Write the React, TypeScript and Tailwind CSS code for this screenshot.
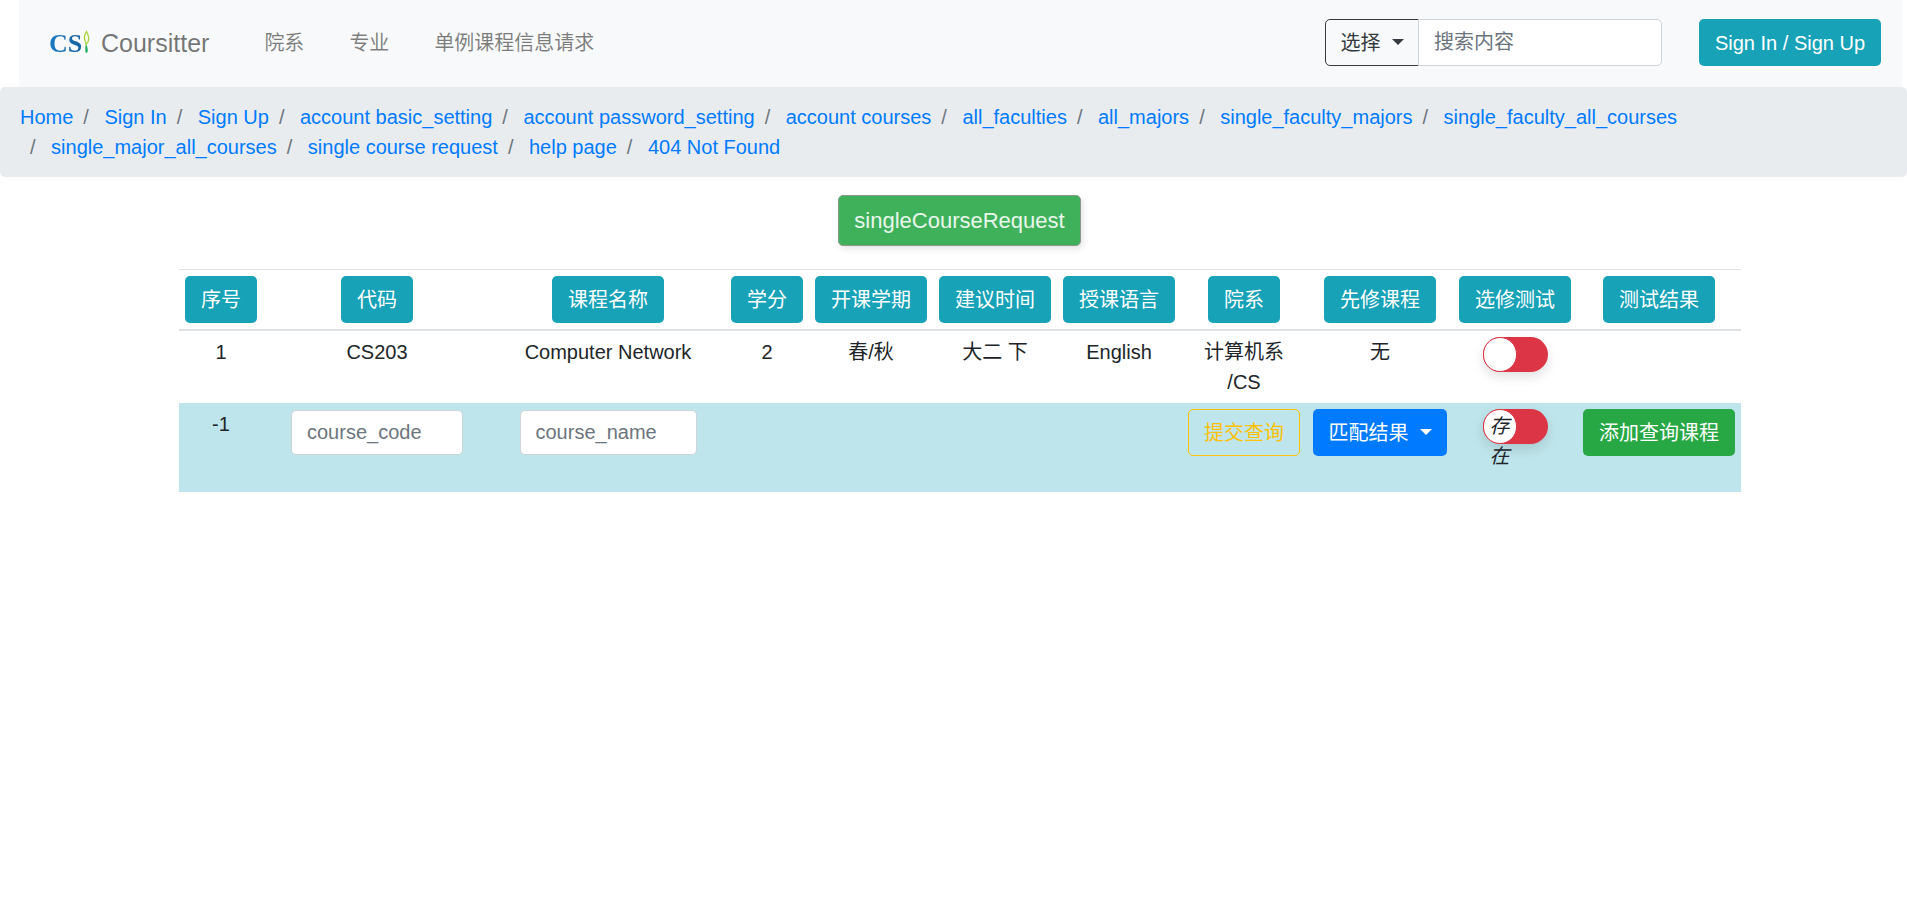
const crumbs = [
  'Home',
  'Sign In',
  'Sign Up',
  'account basic_setting',
  'account password_setting',
  'account courses',
  'all_faculties',
  'all_majors',
  'single_faculty_majors',
  'single_faculty_all_courses',
  'single_major_all_courses',
  'single course request',
  'help page',
  '404 Not Found',
]

const headers = [
  { label: '序号', width: 'w-[84px]' },
  { label: '代码', width: 'w-[228px]' },
  { label: '课程名称', width: 'w-[234px]' },
  { label: '学分', width: 'w-[84px]' },
  { label: '开课学期', width: 'w-[124px]' },
  { label: '建议时间', width: 'w-[124px]' },
  { label: '授课语言', width: 'w-[124px]' },
  { label: '院系', width: 'w-[126px]' },
  { label: '先修课程', width: 'w-[146px]' },
  { label: '选修测试', width: 'w-[124px]' },
  { label: '测试结果', width: 'w-[164px]' },
]

const row = ['1', 'CS203', 'Computer Network', '2', '春/秋', '大二 下', 'English', '计算机系 /CS', '无']

function Caret({ className }: { className: string }) {
  return <span className={`ml-[11px] inline-block h-0 w-0 border-x-[6px] border-t-[6px] border-x-transparent align-[5px] ${className}`} />
}

function Toggle({ children }: { children?: React.ReactNode }) {
  return (
    <div className="relative mx-auto h-[35px] w-[65px] rounded-full bg-[#dc3545] shadow-[0_5px_12px_rgba(0,0,0,0.12)]">
      <div className="h-[35px] w-[34px] rounded-full border border-[#dc3545] bg-white" />
      {children}
    </div>
  )
}

export default function App() {
  return (
    <div className="min-h-screen bg-white font-['Liberation_Sans','Noto_Sans_CJK_SC',sans-serif] text-[20px] leading-[30px] text-[#212529]">
      <nav className="ml-[19px] mr-[5px] flex h-[87px] items-center bg-[#f8f9fa] pb-[2px] pl-[30px] pr-[21px]">
        <a className="flex items-center">
          <span className="mt-[3px] flex h-[30px] w-[42px] items-center overflow-hidden">
            <span className="bg-gradient-to-r from-[#1b7cc4] to-[#17609f] bg-clip-text font-['Liberation_Serif',serif] text-[26px] font-bold leading-[30px] text-transparent">CS</span>
            <svg viewBox="0 0 7 24" className="ml-[1px] mt-[-4px] h-[24px] w-[7px]">
              <path d="M3.5 1.5C1.6 4.5 0.9 7.5 2 10.5C2.6 12 3 13 3 14.5C5 12.5 6.2 9.5 5.6 7C5.2 5 4.4 3.2 3.5 1.5Z" fill="#f4f8e8" stroke="#a4d233" strokeWidth="1.2" />
              <path d="M2.6 15.5C2.2 18 2 20.5 2.8 23C4.2 23 4.8 22 4.8 20.5C4.8 18.5 4.2 16.8 3.6 15Z" fill="#1fae5c" />
            </svg>
          </span>
          <span className="ml-[10px] text-[25px] leading-[38px] text-[#0000008c]">Coursitter</span>
        </a>
        <div className="ml-[55px] flex gap-[45px] text-[#00000080]">
          <a>院系</a>
          <a>专业</a>
          <a>单例课程信息请求</a>
        </div>
        <div className="ml-auto flex h-[47px]">
          <button className="h-full w-[94px] rounded-l-[5px] border border-[#343a40] text-[#343a40]">
            选择
            <Caret className="border-t-[#343a40]" />
          </button>
          <input
            placeholder="搜索内容"
            className="ml-[-1px] h-full w-[244px] rounded-r-[5px] border border-[#ced4da] bg-white px-[15px] placeholder:text-[#6c757d]"
          />
        </div>
        <button className="ml-[37px] h-[47px] w-[182px] rounded-[5px] bg-[#17a2b8] text-white">Sign In / Sign Up</button>
      </nav>

      <div className="flex h-[90px] flex-wrap content-start rounded-[5px] bg-[#e9ecef] px-5 py-[15px]">
        {crumbs.map((c, i) => (
          <span key={c} className="whitespace-pre">
            {i > 0 && <span className="pl-[10px] pr-[15.5px] text-[#6c757d]">/</span>}
            <a className="text-[#007bff]">{c}</a>
          </span>
        ))}
      </div>

      <div className="ml-[179px] w-[1562px]">
        <div className="mt-[18px] flex justify-center">
          <button className="mr-px h-[51px] w-[243px] rounded-[5px] border border-[#8a9a8f] bg-[#40b15b] text-[22px] text-[#e8f6ec] shadow-[2px_3px_6px_rgba(0,0,0,0.1)]">
            singleCourseRequest
          </button>
        </div>

        <table className="mt-[23px] w-full table-fixed border-collapse text-center">
          <colgroup>
            {headers.map((h) => (
              <col key={h.label} className={h.width} />
            ))}
          </colgroup>
          <thead>
            <tr className="border-t border-b-2 border-[#dee2e6]">
              {headers.map((h) => (
                <th key={h.label} className="p-[6px] font-normal">
                  <span className="inline-block h-[47px] rounded-[5px] bg-[#17a2b8] px-4 py-[9px] text-white">{h.label}</span>
                </th>
              ))}
            </tr>
          </thead>
          <tbody>
            <tr className="h-[72px]">
              {row.map((cell) => (
                <td key={cell} className="p-[6px] align-top">
                  {cell}
                </td>
              ))}
              <td className="p-[6px] align-top">
                <Toggle />
              </td>
              <td className="p-[6px]" />
            </tr>
            <tr className="h-[89px] bg-[#bee5eb]">
              <td className="p-[6px] align-top">-1</td>
              <td className="p-[6px] align-top">
                <input
                  placeholder="course_code"
                  className="mx-auto mt-px block h-[45px] w-[172px] rounded-[5px] border border-[#ced4da] bg-white px-[15px] placeholder:text-[#6c757d]"
                />
              </td>
              <td className="p-[6px] align-top">
                <input
                  placeholder="course_name"
                  className="mx-auto mt-px block h-[45px] w-[177px] rounded-[5px] border border-[#ced4da] bg-white px-[15px] placeholder:text-[#6c757d]"
                />
              </td>
              <td className="p-[6px]" colSpan={4} />
              <td className="p-[6px] align-top">
                <button className="h-[47px] w-[112px] rounded-[5px] border border-[#ffc107] text-[#ffc107]">提交查询</button>
              </td>
              <td className="p-[6px] align-top">
                <button className="h-[47px] w-[134px] rounded-[5px] bg-[#007bff] text-white">
                  匹配结果
                  <Caret className="border-t-white" />
                </button>
              </td>
              <td className="p-[6px] align-top">
                <Toggle>
                  <span className="absolute left-[6px] top-[2px] w-[22px] italic">存在</span>
                </Toggle>
              </td>
              <td className="p-[6px] align-top">
                <button className="h-[47px] w-[152px] rounded-[5px] bg-[#28a745] text-white">添加查询课程</button>
              </td>
            </tr>
          </tbody>
        </table>
      </div>
    </div>
  )
}
